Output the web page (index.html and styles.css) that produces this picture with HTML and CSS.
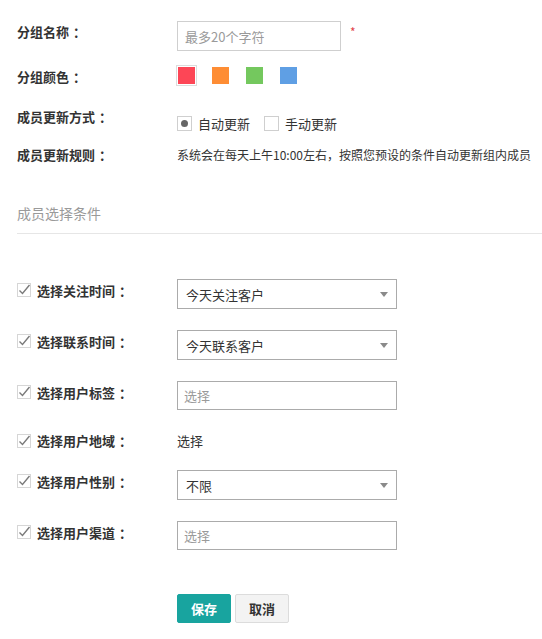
FILE: index.html
```html
<!DOCTYPE html>
<html lang="zh-CN">
<head>
<meta charset="utf-8">
<title>分组设置</title>
<link rel="stylesheet" href="styles.css">
</head>
<body>
<div class="page">
  <div class="form-top">
    <div class="row row-name">
      <div class="label">分组名称<span class="colon">：</span></div>
      <div class="field">
        <input class="text-input" type="text" placeholder="最多20个字符">
        <span class="required">*</span>
      </div>
    </div>
    <div class="row row-color">
      <div class="label">分组颜色<span class="colon">：</span></div>
      <div class="swatches">
        <span class="swatch selected"><span class="swatch-fill red"></span></span>
        <span class="swatch"><span class="swatch-fill orange"></span></span>
        <span class="swatch"><span class="swatch-fill green"></span></span>
        <span class="swatch"><span class="swatch-fill blue"></span></span>
      </div>
    </div>
    <div class="row row-mode">
      <div class="label">成员更新方式<span class="colon">：</span></div>
      <div class="radio-group">
        <span class="radio checked"></span><span class="radio-text">自动更新</span>
        <span class="radio second"></span><span class="radio-text">手动更新</span>
      </div>
    </div>
    <div class="row row-rule">
      <div class="label">成员更新规则<span class="colon">：</span></div>
      <div class="rule-text">系统会在每天上午10:00左右，按照您预设的条件自动更新组内成员</div>
    </div>
  </div>

  <h3 class="section-title">成员选择条件</h3>

  <div class="conditions">
    <div class="cond-row">
      <div class="cond-label"><svg class="check" width="14" height="14" viewBox="0 0 14 14"><rect x="0.5" y="0.5" width="13" height="13" fill="#fff" stroke="#d6d6d6"/><path d="M2.5 7.5 L5.5 10.5 L12.5 2" fill="none" stroke="#7a7a7a" stroke-width="1.4"/></svg><span>选择关注时间 <span class="cond-colon">：</span></span></div>
      <div class="select"><span>今天关注客户</span><i class="arrow"></i></div>
    </div>
    <div class="cond-row">
      <div class="cond-label"><svg class="check" width="14" height="14" viewBox="0 0 14 14"><rect x="0.5" y="0.5" width="13" height="13" fill="#fff" stroke="#d6d6d6"/><path d="M2.5 7.5 L5.5 10.5 L12.5 2" fill="none" stroke="#7a7a7a" stroke-width="1.4"/></svg><span>选择联系时间 <span class="cond-colon">：</span></span></div>
      <div class="select"><span>今天联系客户</span><i class="arrow"></i></div>
    </div>
    <div class="cond-row">
      <div class="cond-label"><svg class="check" width="14" height="14" viewBox="0 0 14 14"><rect x="0.5" y="0.5" width="13" height="13" fill="#fff" stroke="#d6d6d6"/><path d="M2.5 7.5 L5.5 10.5 L12.5 2" fill="none" stroke="#7a7a7a" stroke-width="1.4"/></svg><span>选择用户标签 <span class="cond-colon">：</span></span></div>
      <input class="cond-input" type="text" placeholder="选择">
    </div>
    <div class="cond-row plain">
      <div class="cond-label"><svg class="check" width="14" height="14" viewBox="0 0 14 14"><rect x="0.5" y="0.5" width="13" height="13" fill="#fff" stroke="#d6d6d6"/><path d="M2.5 7.5 L5.5 10.5 L12.5 2" fill="none" stroke="#7a7a7a" stroke-width="1.4"/></svg><span>选择用户地域 <span class="cond-colon">：</span></span></div>
      <span class="plain-text">选择</span>
    </div>
    <div class="cond-row">
      <div class="cond-label"><svg class="check" width="14" height="14" viewBox="0 0 14 14"><rect x="0.5" y="0.5" width="13" height="13" fill="#fff" stroke="#d6d6d6"/><path d="M2.5 7.5 L5.5 10.5 L12.5 2" fill="none" stroke="#7a7a7a" stroke-width="1.4"/></svg><span>选择用户性别 <span class="cond-colon">：</span></span></div>
      <div class="select"><span>不限</span><i class="arrow"></i></div>
    </div>
    <div class="cond-row">
      <div class="cond-label"><svg class="check" width="14" height="14" viewBox="0 0 14 14"><rect x="0.5" y="0.5" width="13" height="13" fill="#fff" stroke="#d6d6d6"/><path d="M2.5 7.5 L5.5 10.5 L12.5 2" fill="none" stroke="#7a7a7a" stroke-width="1.4"/></svg><span>选择用户渠道 <span class="cond-colon">：</span></span></div>
      <input class="cond-input" type="text" placeholder="选择">
    </div>
  </div>

  <div class="actions">
    <button class="btn btn-save" type="button">保存</button>
    <button class="btn btn-cancel" type="button">取消</button>
  </div>
</div>
</body>
</html>
```

FILE: styles.css
```css
body {
  margin: 0;
  background: #fff;
  color: #333;
  font-family: "Noto Sans CJK SC", "Microsoft YaHei", sans-serif;
}

.page {
  padding: 21px 0 0 17px;
}

.form-top {
  display: flex;
  flex-direction: column;
}

.row {
  display: flex;
  align-items: flex-start;
}

.label {
  width: 160px;
  flex: none;
  font-size: 13px;
  font-weight: 700;
  line-height: 22px;
  color: #333;
}

.colon {
  margin-left: 4px;
}

.cond-colon {
  margin-left: 1px;
}

.row-name {
  height: 30px;
}

.field {
  display: flex;
  align-items: flex-start;
}

.text-input {
  box-sizing: border-box;
  width: 164px;
  height: 30px;
  margin: 0;
  border: 1px solid #cfcfcf;
  padding: 0 7px;
  font-family: "Noto Sans CJK SC", sans-serif;
  font-size: 13px;
  color: #333;
  outline: none;
}

.text-input::placeholder,
.cond-input::placeholder {
  color: #9a9a9a;
}

.required {
  color: #e2434b;
  font-size: 12px;
  line-height: 22px;
  margin-left: 9px;
}

.row-color {
  margin-top: 14px;
  height: 21px;
}

.row-color .label {
  margin-top: 1px;
}

.swatches {
  display: flex;
  gap: 13px;
  margin-left: -1px;
}

.swatch {
  box-sizing: border-box;
  width: 21px;
  height: 21px;
  padding: 1px;
  border: 1px solid transparent;
}

.swatch.selected {
  border-color: #dcdcdc;
}

.swatch-fill {
  display: block;
  width: 17px;
  height: 17px;
}

.red { background: #fd4656; }
.orange { background: #fe8d34; }
.green { background: #74c85e; }
.blue { background: #5f9fe4; }

.row-mode {
  margin-top: 20px;
}

.radio-group {
  display: flex;
  align-items: center;
  margin-top: 10px;
}

.radio {
  box-sizing: border-box;
  width: 15px;
  height: 15px;
  border: 1px solid #cfcfcf;
  background: #fff;
  display: flex;
  align-items: center;
  justify-content: center;
}

.radio.checked::after {
  content: "";
  width: 7px;
  height: 7px;
  border-radius: 50%;
  background: #666;
}

.radio.second {
  margin-left: 14px;
}

.radio-text {
  font-size: 13px;
  line-height: 15px;
  margin-left: 6px;
  color: #333;
}

.row-rule {
  margin-top: 13px;
}

.rule-text {
  font-size: 12px;
  line-height: 22px;
  color: #333;
}

.section-title {
  margin: 37px 0 0;
  padding-bottom: 10px;
  border-bottom: 1px solid #e6e6e6;
  font-size: 14px;
  font-weight: 400;
  line-height: 20px;
  color: #9a9a9a;
}

.conditions {
  margin-top: 45px;
  display: flex;
  flex-direction: column;
  gap: 21px;
}

.cond-row {
  display: flex;
  align-items: flex-start;
  height: 30px;
}

.cond-row.plain {
  height: 17px;
  align-items: center;
}

.cond-label {
  width: 160px;
  flex: none;
  height: 22px;
  display: flex;
  align-items: center;
  font-size: 13px;
  font-weight: 700;
  color: #333;
}

.check {
  flex: none;
  margin-right: 6px;
}

.select {
  box-sizing: border-box;
  width: 220px;
  height: 30px;
  border: 1px solid #ababab;
  padding: 0 8px 0 8px;
  display: flex;
  align-items: center;
  justify-content: space-between;
  font-size: 13px;
  color: #333;
}

.arrow {
  width: 0;
  height: 0;
  border-left: 4px solid transparent;
  border-right: 4px solid transparent;
  border-top: 5px solid #8a8a8a;
}

.cond-input {
  box-sizing: border-box;
  width: 220px;
  height: 29px;
  margin: 0;
  border: 1px solid #ababab;
  padding: 0 6px;
  font-family: "Noto Sans CJK SC", sans-serif;
  font-size: 13px;
  color: #333;
  outline: none;
}

.plain-text {
  font-size: 13px;
  color: #333;
  line-height: 17px;
}

.actions {
  margin-top: 43px;
  padding-left: 160px;
  display: flex;
  gap: 4px;
}

.btn {
  box-sizing: border-box;
  width: 54px;
  height: 29px;
  margin: 0;
  border-radius: 2px;
  font-family: "Noto Sans CJK SC", sans-serif;
  font-size: 13px;
  font-weight: 700;
  cursor: pointer;
}

.btn-save {
  background: #18a49f;
  border: 1px solid #18a49f;
  color: #fff;
}

.btn-cancel {
  background: #f3f3f3;
  border: 1px solid #dcdcdc;
  color: #333;
}
```
